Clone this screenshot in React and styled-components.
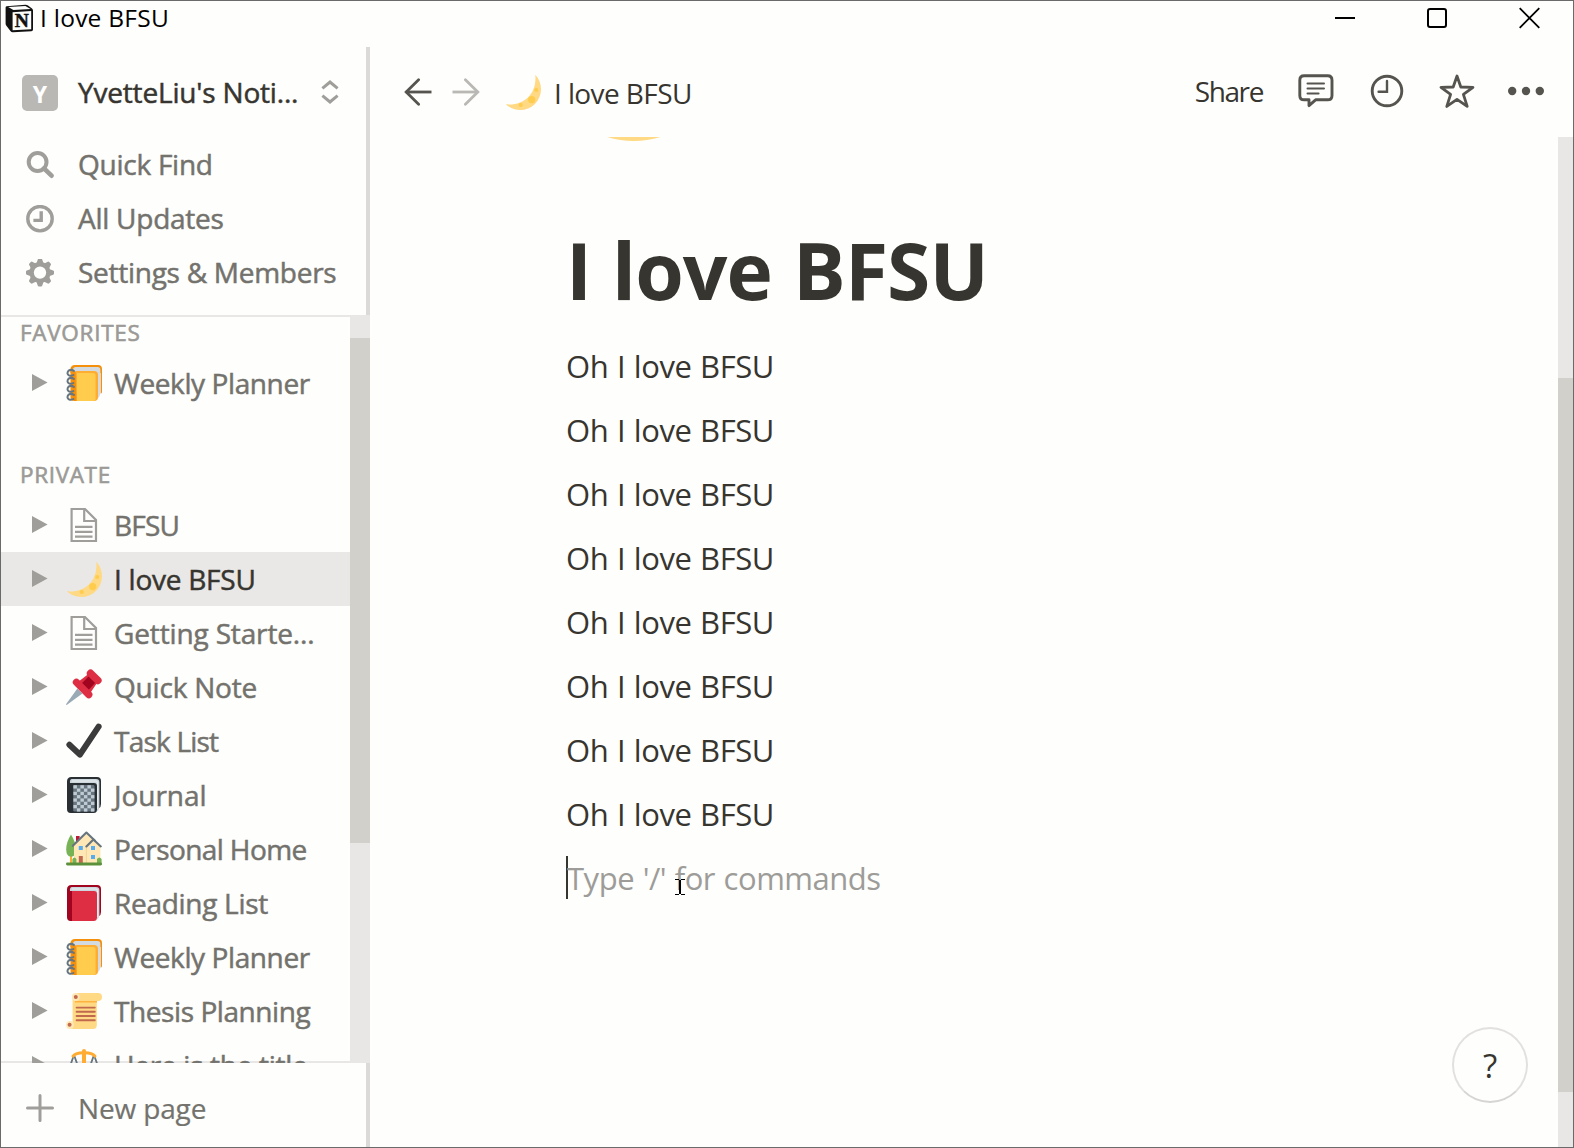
import React from "react";
import styled, { createGlobalStyle } from "styled-components";

const GlobalStyle = createGlobalStyle`
  * { box-sizing: border-box; }
  body {
    margin: 0;
    background: #fefefc;
    font-family: "Open Sans", "Noto Sans", sans-serif;
    color: #37352f;
  }
  svg { display: block; flex: none; }
`;

const Window = styled.div`
  display: flex;
  flex-direction: column;
  position: relative;
  width: 1574px;
  height: 1148px;
  border: 1px solid #6b6a6a;
  background: #fefefc;
  overflow: hidden;
`;

const Label = styled.span`
  white-space: nowrap;
  letter-spacing: ${(p) => p.$ls || 0}px;
`;

/* ---------- title bar ---------- */
const TitleBar = styled.header`
  display: flex;
  align-items: flex-start;
  justify-content: space-between;
  height: 46px;
  flex: none;
  padding: 3px 33px 0 4px;
`;

const TitleGroup = styled.div`
  display: flex;
  align-items: flex-start;
  gap: 6px;
  color: #000;
  font-size: 24.5px;
  line-height: 28px;
`;

const WindowControls = styled.div`
  display: flex;
  gap: 72px;
  padding-top: 3px;
`;

/* ---------- frame ---------- */
const Body = styled.div`
  display: flex;
  flex: 1;
  min-height: 0;
`;

const Sidebar = styled.aside`
  display: flex;
  flex-direction: column;
  width: 369px;
  flex: none;
`;

const SidebarTop = styled.div`
  height: 268px;
  flex: none;
  padding-top: 19px;
  border-right: 4px solid #dbdad8;
`;

const MenuRow = styled.div`
  display: flex;
  align-items: center;
  height: 54px;
  padding-left: ${(p) => p.$inset || 25}px;
  font-size: 28px;
  line-height: 52px;
  margin-bottom: ${(p) => p.$after || 0}px;
  color: ${(p) => (p.$strong ? "#37352f" : "#73726d")};
  -webkit-text-stroke: ${(p) => p.$stroke || "0.5px"};
`;

const MenuLabel = styled(Label)`
  margin-left: ${(p) => p.$gap || 24}px;
  padding-bottom: ${(p) => p.$lift ?? 2}px;
`;

const WorkspaceBadge = styled.div`
  width: 36px;
  height: 36px;
  flex: none;
  border-radius: 5px;
  background: #b9b8b4;
  color: #fff;
  font-size: 23px;
  font-weight: 700;
  line-height: 38px;
  text-align: center;
  -webkit-text-stroke: 0;
`;

const Switcher = styled.div`
  margin-left: 23px;
  padding-bottom: 2px;
`;

const Scroller = styled.div`
  display: flex;
  height: 748px;
  flex: none;
`;

const PageList = styled.nav`
  flex: 1;
  min-width: 0;
  height: 748px;
  overflow: hidden;
  box-shadow: inset 0 2px 0 #e8e7e5, inset 0 -2px 0 #e8e7e5;
`;

const SectionTitle = styled.div`
  height: 30px;
  margin-top: ${(p) => p.$before}px;
  margin-bottom: ${(p) => p.$after}px;
  padding-left: 19px;
  font-size: 22.5px;
  line-height: 30px;
  color: #9b9a97;
  -webkit-text-stroke: 0.6px;
`;

const PageRow = styled.div`
  display: flex;
  align-items: center;
  height: 54px;
  padding-left: 31px;
  background: ${(p) => (p.$active ? "#e9e8e6" : "transparent")};
  color: ${(p) => (p.$active ? "#37352f" : "#73726d")};
  font-size: 28px;
  line-height: 54px;
  -webkit-text-stroke: 0.5px;
`;

const Toggle = styled.div`
  width: 34px;
  flex: none;
`;

const PageIcon = styled.div`
  width: 36px;
  margin-right: 12px;
  flex: none;
`;

const Track = styled.div`
  display: flex;
  flex-direction: column;
  flex: none;
  width: ${(p) => p.$w}px;
  padding-top: ${(p) => p.$before}px;
  background: #e8e7e5;
`;

const Thumb = styled.div`
  height: ${(p) => p.$h}px;
  background: #d2d0ca;
`;

const SidebarFooter = styled.div`
  flex: 1;
  padding-top: 18px;
  border-right: 4px solid #dbdad8;
`;

/* ---------- main column ---------- */
const Main = styled.main`
  display: flex;
  flex-direction: column;
  flex: 1;
  min-width: 0;
`;

const TopBar = styled.div`
  display: flex;
  align-items: center;
  height: 90px;
  flex: none;
  padding: 0 29px 0 34px;
`;

const HistoryButtons = styled.div`
  display: flex;
  gap: 20px;
`;

const Crumb = styled.div`
  display: flex;
  align-items: center;
  flex: 1;
  margin-left: 25px;
  gap: 13px;
  font-size: 28px;
  line-height: 40px;
`;

const CrumbLabel = styled(Label)`
  padding-top: 1px;
`;

const Actions = styled.div`
  display: flex;
  align-items: center;
  padding-bottom: 2px;
  font-size: 28px;
  line-height: 40px;
`;

const Action = styled.div`
  margin-left: ${(p) => p.$gap}px;
`;

const ContentFrame = styled.div`
  display: flex;
  flex: 1;
  min-height: 0;
`;

const Page = styled.article`
  flex: 1;
  min-width: 0;
  overflow: hidden;
  padding-left: 196px;
`;

const Cover = styled.div`
  margin: -152px 0 0 2px;
  height: 156px;
`;

const Heading = styled.h1`
  margin: 81px 0 16px;
  font-size: 78.5px;
  font-weight: 700;
  line-height: 96px;
  letter-spacing: -0.9px;
  word-spacing: 1.5px;
`;

const Line = styled.p`
  margin: 0;
  height: 64px;
  font-size: 31px;
  line-height: 64px;
  letter-spacing: -0.42px;
  word-spacing: 1px;
  white-space: nowrap;
`;

const EmptyLine = styled(Line)`
  display: flex;
  align-items: center;
  color: #9d9c99;
  letter-spacing: -0.48px;
`;

const Caret = styled.span`
  width: 2px;
  height: 43px;
  margin: -2px -1px 0 0;
  background: #37352f;
`;

const HelpButton = styled.button`
  position: absolute;
  right: 45px;
  bottom: 44px;
  width: 76px;
  height: 76px;
  padding: 2px 0 0;
  border: 2px solid #e2e1df;
  border-bottom-color: #d6d5d3;
  border-radius: 50%;
  background: #fefefc;
  color: #37352f;
  font: 400 33px/70px "Open Sans", "Noto Sans", sans-serif;
`;

const Pointer = styled.div`
  position: absolute;
  left: 674px;
  top: 877px;
`;

/* ---------- drawings ---------- */
const Logo = () => (
  <svg width="29" height="29" viewBox="0 0 29 29">
    <path d="M1.5 2.2 L20.5 .8 Q22 .8 23 1.6 L27 4.6 Q28 5.4 28 6.6 V25.4 Q28 27 26.4 27.2 L8 28.2 Q6.4 28.3 5.4 27 L1.4 21.8 Q.6 20.8 .6 19.6 V3.6 Q.6 2.4 1.5 2.2Z" fill="#111" />
    <path d="M3.2 3 L20.4 1.9 L25.6 5 L8.4 6.1Z" fill="#fefefc" />
    <path d="M7.6 8.2 L26.2 7 V25.2 L7.6 26.3Z" fill="#fefefc" />
    <text x="16.8" y="23" textAnchor="middle" fontFamily="'Liberation Serif', serif" fontWeight="700" fontSize="19.5" fill="#111" stroke="#111" strokeWidth=".5">N</text>
  </svg>
);

const UpDown = () => (
  <svg width="18" height="26" viewBox="0 0 18 26" fill="none" stroke="#9f9e9b" strokeWidth="3">
    <path d="M1.4 9.4 L9 3 L16.6 9.4 M1.4 16.6 L9 23 L16.6 16.6" />
  </svg>
);

const Search = () => (
  <svg width="28" height="28" viewBox="0 0 28 28" fill="none" stroke="#9f9e9b">
    <circle cx="11.6" cy="11" r="8.9" strokeWidth="4" />
    <path d="M18 17.4 L25.5 24.7" strokeWidth="4.6" strokeLinecap="round" />
  </svg>
);

const Updates = () => (
  <svg width="28" height="28" viewBox="0 0 28 28" fill="none" stroke="#9f9e9b" strokeWidth="3.4">
    <circle cx="14" cy="13.7" r="12.2" />
    <path d="M15.2 6.2 V15.4 H7.4" />
  </svg>
);

const teeth = [0, 45, 90, 135, 180, 225, 270, 315];
const Gear = () => (
  <svg width="28" height="28" viewBox="0 0.4 28 28">
    <circle cx="14" cy="14" r="8.4" fill="none" stroke="#9f9e9b" strokeWidth="4.4" />
    {teeth.map((a) => (
      <path key={a} d="M10.4 5 L11.8 .8 Q12 0 13 0 H15 Q16 0 16.2 .8 L17.6 5Z" fill="#9f9e9b" transform={`rotate(${a} 14 14)`} />
    ))}
  </svg>
);

const Plus = () => (
  <svg width="28" height="28" viewBox="0 0 28 28" stroke="#9f9e9b" strokeWidth="3" strokeLinecap="round">
    <path d="M14 1.5 V26.5 M1.5 14 H26.5" />
  </svg>
);

const Arrow = ({ flip, color }) => (
  <svg width="28" height="28" viewBox="0 0 28 28" fill="none" stroke={color} strokeWidth="2.8">
    <g transform={flip ? "translate(28 0) scale(-1 1)" : undefined}>
      <path d="M1.8 14 H27.5" />
      <path d="M14.6 1.8 L2.2 14 L14.6 26.2" strokeLinecap="round" />
    </g>
  </svg>
);

const Comment = () => (
  <svg width="36" height="34" viewBox="0 0 36 34" fill="none" stroke="#56544e">
    <path d="M6.2 1.8 H29.6 Q34 1.8 34 6.2 V21.4 Q34 25.8 29.6 25.8 H17.6 L11 31.6 V25.8 H6.2 Q1.8 25.8 1.8 21.4 V6.2 Q1.8 1.8 6.2 1.8Z" strokeWidth="2.9" strokeLinejoin="round" />
    <path d="M9.5 9.6 H26 M9.5 14.6 H26 M9.5 19.6 H20.6" strokeWidth="2" strokeLinecap="round" />
  </svg>
);

const Clock = () => (
  <svg width="34" height="34" viewBox="0 0 34 34" fill="none" stroke="#56544e">
    <circle cx="17" cy="17" r="14.8" strokeWidth="2.9" />
    <path d="M17 7 V17.8 H8.6" strokeWidth="2.4" strokeLinecap="round" />
  </svg>
);

const Star = () => (
  <svg width="36" height="36" viewBox="0 0 36 36" fill="none" stroke="#56544e" strokeWidth="2.8" strokeLinejoin="round">
    <path d="M18 3 L21.8 14 L34 14.3 L24.4 21.4 L28.2 33.4 L18 26.4 L7.8 33.4 L11.6 21.4 L2 14.3 L14.2 14Z" />
  </svg>
);

const Dots = () => (
  <svg width="36" height="10" viewBox="0 0 36 10" fill="#56544e">
    <circle cx="4.2" cy="5" r="4.2" />
    <circle cx="18" cy="5" r="4.2" />
    <circle cx="31.8" cy="5" r="4.2" />
  </svg>
);

const Minimize = () => (
  <svg width="20" height="22" viewBox="0 0 20 22">
    <path d="M0 11 H20" stroke="#000" strokeWidth="2" />
  </svg>
);
const Maximize = () => (
  <svg width="20" height="22" viewBox="0 0 20 22">
    <rect x="1" y="2" width="18" height="18" rx="2" fill="none" stroke="#000" strokeWidth="2" />
  </svg>
);
const Close = () => (
  <svg width="21" height="22" viewBox="0 0 21 22">
    <path d="M.7 1.2 L20.3 20.8 M20.3 1.2 L.7 20.8" stroke="#000" strokeWidth="1.8" />
  </svg>
);

const Triangle = () => (
  <svg width="16" height="18" viewBox="0 0 16 18">
    <path d="M0 0 L15.6 8.5 L0 17Z" fill="#9f9e9b" />
  </svg>
);

const IBeam = () => (
  <svg width="11" height="18" viewBox="0 0 11 18" fill="#000" shapeRendering="crispEdges">
    <path d="M0 1 H4 V2 H0Z M6 1 H10 V2 H6Z M4 2 H6 V16 H4Z M0 16 H4 V17 H0Z M6 16 H10 V17 H6Z" />
  </svg>
);

const Moon = ({ size = 36 }) => (
  <svg width={size} height={size} viewBox="0 0 36 36">
    <path fill="#ffd983" d="M30.3.8C32 19 20 32 .8 30.3c8.2 7.7 21.1 7.6 29.1-.4C37.9 21.9 38 9 30.3.8z" />
    <g fill="#ffcc4d">
      <circle cx="31.2" cy="16" r="2" />
      <circle cx="26.7" cy="25.6" r="3.6" />
      <circle cx="15.8" cy="31" r="2.1" />
    </g>
  </svg>
);

const Doc = () => (
  <svg width="36" height="36" viewBox="0 0 36 36" fill="none" stroke="#9f9e9b" strokeWidth="2.2">
    <path d="M5.6 2 H19 L30 13 V34 H5.6Z" />
    <path d="M18.2 2 V14 H30" />
    <path d="M9 19.8 H26.5 M9 24.8 H26.5 M9 29.6 H26.5" />
  </svg>
);

const Pin = () => (
  <svg width="36" height="36" viewBox="0 0 36 36" strokeLinecap="round">
    <path d="M11.4 19.6 L16.4 24.6 L.7 36 Q-.2 36 .2 35Z" fill="#99aab5" />
    <path d="M12 14.4 L22.4 5.4 L30.8 13.6 L22 24Z" fill="#a0041e" />
    <path d="M10.4 13.2 L22.8 25.6" stroke="#dd2e44" strokeWidth="7.2" />
    <path d="M24.6 4.4 L31.8 11.4" stroke="#dd2e44" strokeWidth="7.6" />
    <path d="M12 13 L22.8 4.8 L22.8 7.2 L14.6 15.6Z M21.2 22.6 L29 14 L31 14 L23.6 25Z" fill="#dd2e44" />
  </svg>
);

const Check = () => (
  <svg width="36" height="36" viewBox="0 0 36 36">
    <path d="M3.4 21.8 L13.9 31.6 L32.6 3.6" fill="none" stroke="#3b3b3b" strokeWidth="6" strokeLinecap="round" strokeLinejoin="round" />
  </svg>
);

const Book = ({ cover, front, checks }) => (
  <svg width="36" height="36" viewBox="0 0 36 36">
    <path d="M5.5 0 H31 Q35 0 35 4 V27 Q35 30 33 31 V6 H1 V4.5 Q1 0 5.5 0Z" fill={cover} />
    <path d="M6 2 H30 Q33.4 2 33.4 5 V30 Q33 33 31 34.5 L29 7 H4 Q3.4 2 6 2Z" fill="#ccd6dd" />
    <path d="M6 4 H30 Q31.5 4.2 31.5 6 V32" fill="none" stroke="#e8edf0" strokeWidth="1.2" />
    <path d="M5 6 H28 Q31 6 31 9 V32.5 Q31 36 27.5 36 H5Z" fill={checks ? cover : front} />
    <path d="M1 4.5 Q2 6 6 6 V36 H4.6 Q1 36 1 32Z" fill={cover} />
    {checks && <rect x="7.2" y="8" width="21.4" height="26.6" rx="1.4" fill="#66757f" />}
    {checks &&
      Array.from({ length: 8 }).flatMap((_, r) =>
        Array.from({ length: 3 }).map((__, c) => (
          <rect key={`${r}-${c}`} x={7.4 + c * 7 + (r % 2 ? 3.5 : 0)} y={8.2 + r * 3.3} width="3.5" height="3.3" fill="#bfcad3" />
        ))
      )}
  </svg>
);

const Planner = () => (
  <svg width="36" height="36" viewBox="0 0 36 36">
    <path d="M9 0 H32 Q36 0 36 4 V27 Q36 28.5 34.6 28.5 V8 H4.5 V4.5 Q4.5 0 9 0Z" fill="#f4900c" />
    <path d="M9.6 2 H31.5 Q34.4 2 34.4 5 V29 Q33.4 33 30.4 34.6 V8 H7 Q6 2 9.6 2Z" fill="#d3dbe1" />
    <path d="M4.5 4 Q5.6 6.8 9 6.6 H12 V36 H8.4 Q4.5 36 4.5 32Z" fill="#f4900c" />
    <path d="M9.6 6 H28 Q32 6 32 10 V32 Q32 36 28 36 H10.4Z" fill="#ffac33" />
    <path d="M11 8 H27 Q29.6 8 29.6 10.6 V34.6 Q29 36 27 36 H11Z" fill="#ffcc4d" />
    {[5, 13, 21, 29].map((y) => (
      <path key={y} d={`M8 ${y + 1} Q5.4 ${y - 1} 2.6 ${y + .6} Q.2 ${y + 3.6} 3 ${y + 5.4} Q5 ${y + 6.4} 7.4 ${y + 5}`} fill="none" stroke="#66757f" strokeWidth="2" strokeLinecap="round" />
    ))}
  </svg>
);

const House = () => (
  <svg width="36" height="36" viewBox="0 0 36 36">
    <path d="M4 24 H6 V34 H4Z" fill="#ffac33" />
    <path d="M5 3.4 Q.2 11 .2 18.6 Q.4 25.6 5 25.8 Q10 25.6 10 18.6 Q9.8 11 5 3.4Z" fill="#77b255" />
    <rect x="10" y="5" width="3.6" height="9" fill="#bb1a34" />
    <path d="M8 14.6 L20.6 2 L28 9 L34.4 15.2 V33.6 H8Z" fill="#ffe8b6" />
    <path d="M20.4 33.6 V14.8 L27.6 8" fill="none" stroke="#f0cf8f" strokeWidth=".8" />
    <path d="M6.8 14.8 L20.4 1.6 L29 9.8" fill="none" stroke="#66757f" strokeWidth="2.1" strokeLinecap="round" strokeLinejoin="round" />
    <path d="M20.4 15.4 L27.4 8.4 L34.8 15.4" fill="none" stroke="#66757f" strokeWidth="2.1" strokeLinecap="round" strokeLinejoin="round" />
    <g fill="#55acee">
      <rect x="12.8" y="15" width="4" height="4" />
      <rect x="25" y="15" width="4" height="4" />
      <rect x="25" y="24" width="4" height="4" />
    </g>
    <rect x="12.8" y="25" width="4" height="8.4" fill="#c1694f" />
    <path d="M6.4 34 V28 Q8.4 25 10.4 28 V34Z M31 34 V28 Q33.4 25 35.6 28 V34Z" fill="#77b255" />
    <rect x="0" y="31.6" width="36" height="2.8" rx="1.4" fill="#5c913b" />
  </svg>
);

const Scroll = () => (
  <svg width="36" height="36" viewBox="0 0 36 36">
    <path d="M6.6 4 H30.8 V32 Q30.8 36 27 36 H4 Q6.6 34 6.6 31Z" fill="#ffd983" />
    <circle cx="4" cy="32" r="3.9" fill="#ffe8b6" />
    <circle cx="3.6" cy="31.8" r="2" fill="#c1694f" />
    <path d="M10 0 H32 Q36 .2 36 4 Q36 8 32 8 H9.6Z" fill="#ffd983" />
    <path d="M9 8.8 H31" stroke="#ffac33" strokeWidth="1.3" />
    <circle cx="9.8" cy="4" r="3.9" fill="#ffe8b6" />
    <circle cx="9.8" cy="4" r="2" fill="#c1694f" />
    <path d="M10.6 14.6 H28.8 M10.6 18.8 H28.8 M10.6 23 H28.8 M10.6 27.2 H28.8" stroke="#c1694f" strokeWidth="1.9" strokeLinecap="round" />
  </svg>
);

const Scales = () => (
  <svg width="36" height="36" viewBox="0 0 36 36" fill="none">
    <path d="M8 8 L3 22 M8 8 L13 22 M28 8 L23 22 M28 8 L33 22" stroke="#66757f" strokeWidth="1.8" />
    <path d="M18 4 V34 M10 34 H26" stroke="#ffac33" strokeWidth="4" strokeLinecap="round" />
    <path d="M7 9.2 Q10 5.6 18 5.8 Q26 5.6 29 9.2" stroke="#ffac33" strokeWidth="3" strokeLinecap="round" />
    <path d="M0 22 H14 Q13 28 7 28 Q1 28 0 22Z M22 22 H36 Q35 28 29 28 Q23 28 22 22Z" fill="#ffac33" />
  </svg>
);

const privatePages = [
  { icon: <Doc />, title: "BFSU", ls: -0.8 },
  { icon: <Moon />, title: "I love BFSU", ls: -0.25, active: true },
  { icon: <Doc />, title: "Getting Starte...", ls: -0.14 },
  { icon: <Pin />, title: "Quick Note", ls: -0.2 },
  { icon: <Check />, title: "Task List", ls: -0.78 },
  { icon: <Book cover="#292f33" front="#66757f" checks />, title: "Journal", ls: -0.05 },
  { icon: <House />, title: "Personal Home", ls: -0.6 },
  { icon: <Book cover="#a0041e" front="#dd2e44" />, title: "Reading List", ls: -0.29 },
  { icon: <Planner />, title: "Weekly Planner", ls: -0.4 },
  { icon: <Scroll />, title: "Thesis Planning", ls: -0.42 },
  { icon: <Scales />, title: "Here is the title", ls: -0.3 },
];

const PageEntry = ({ icon, title, ls, active }) => (
  <PageRow $active={active}>
    <Toggle><Triangle /></Toggle>
    <PageIcon>{icon}</PageIcon>
    <Label $ls={ls}>{title}</Label>
  </PageRow>
);

const lines = Array.from({ length: 8 }, () => "Oh I love BFSU");

export default function App() {
  return (
    <>
      <GlobalStyle />
      <Window>
        <TitleBar>
          <TitleGroup>
            <Logo />
            <Label $ls={0.25}>I love BFSU</Label>
          </TitleGroup>
          <WindowControls>
            <Minimize />
            <Maximize />
            <Close />
          </WindowControls>
        </TitleBar>
        <Body>
          <Sidebar>
            <SidebarTop>
              <MenuRow $inset={21} $strong $after={18}>
                <WorkspaceBadge>Y</WorkspaceBadge>
                <MenuLabel $gap={20} $ls={-0.18}>YvetteLiu's Noti...</MenuLabel>
                <Switcher><UpDown /></Switcher>
              </MenuRow>
              <MenuRow><Search /><MenuLabel $ls={-0.25}>Quick Find</MenuLabel></MenuRow>
              <MenuRow><Updates /><MenuLabel $ls={-0.25}>All Updates</MenuLabel></MenuRow>
              <MenuRow><Gear /><MenuLabel $ls={-0.27}>Settings &amp; Members</MenuLabel></MenuRow>
            </SidebarTop>
            <Scroller>
              <PageList>
                <SectionTitle $before={3} $after={8}><Label $ls={0.7}>FAVORITES</Label></SectionTitle>
                <PageEntry icon={<Planner />} title="Weekly Planner" ls={-0.4} />
                <SectionTitle $before={50} $after={8}><Label $ls={0.65}>PRIVATE</Label></SectionTitle>
                {privatePages.map((p) => <PageEntry key={p.title} {...p} />)}
              </PageList>
              <Track $w={20} $before={23}><Thumb $h={505} /></Track>
            </Scroller>
            <SidebarFooter>
              <MenuRow $stroke="0.2px"><Plus /><MenuLabel $lift={0} $ls={-0.14}>New page</MenuLabel></MenuRow>
            </SidebarFooter>
          </Sidebar>
          <Main>
            <TopBar>
              <HistoryButtons>
                <Arrow color="#56544e" />
                <Arrow color="#b9b8b4" flip />
              </HistoryButtons>
              <Crumb>
                <Moon />
                <CrumbLabel $ls={-0.6}>I love BFSU</CrumbLabel>
              </Crumb>
              <Actions>
                <Label $ls={-1.4}>Share</Label>
                <Action $gap={35}><Comment /></Action>
                <Action $gap={36}><Clock /></Action>
                <Action $gap={35}><Star /></Action>
                <Action $gap={33}><Dots /></Action>
              </Actions>
            </TopBar>
            <ContentFrame>
              <Page>
                <Cover><Moon size={156} /></Cover>
                <Heading>I love BFSU</Heading>
                {lines.map((t, i) => <Line key={i}>{t}</Line>)}
                <EmptyLine><Caret />Type '/' for commands</EmptyLine>
              </Page>
              <Track $w={15} $before={241}><Thumb $h={714} /></Track>
            </ContentFrame>
          </Main>
        </Body>
        <HelpButton>?</HelpButton>
        <Pointer><IBeam /></Pointer>
      </Window>
    </>
  );
}
